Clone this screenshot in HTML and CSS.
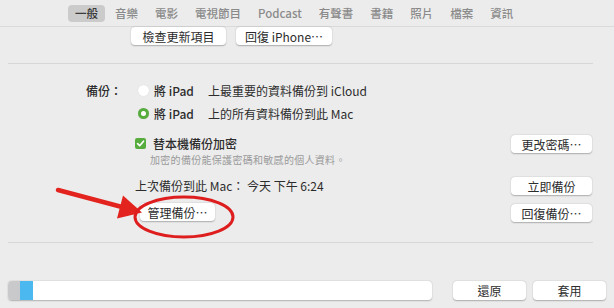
FILE: index.html
```html
<!DOCTYPE html>
<html lang="zh-Hant">

<head>
    <meta charset="UTF-8">
    <title>一般</title>
    <link rel="stylesheet" href="styles.css">
</head>

<body>
    <div class="window">
        <nav class="tabs">
            <span class="tab active">一般</span>
            <span class="tab">音樂</span>
            <span class="tab">電影</span>
            <span class="tab">電視節目</span>
            <span class="tab">Podcast</span>
            <span class="tab">有聲書</span>
            <span class="tab">書籍</span>
            <span class="tab">照片</span>
            <span class="tab">檔案</span>
            <span class="tab">資訊</span>
        </nav>

        <div class="top-row">
            <button class="btn btn-check">檢查更新項目</button>
            <button class="btn btn-restore-phone">回復 iPhone⋯</button>
        </div>

        <div class="divider divider-top"></div>

        <section class="backup">
            <div class="options">
                <div class="radio-row first">
                    <span class="label">備份：</span>
                    <span class="radio"></span>
                    <span class="target">將 iPad</span>
                    <span>上最重要的資料備份到 iCloud</span>
                </div>
                <div class="radio-row">
                    <span class="label"></span>
                    <span class="radio checked"></span>
                    <span class="target">將 iPad</span>
                    <span>上的所有資料備份到此 Mac</span>
                </div>
                <div class="check-row">
                    <span class="checkbox">
                        <svg width="9" height="9" viewBox="0 0 9 9">
                            <path d="M1.6 4.6 L3.7 6.7 L7.5 2.2" fill="none" stroke="#fff" stroke-width="1.7" stroke-linecap="round" stroke-linejoin="round" />
                        </svg>
                    </span>
                    <span class="check-text">替本機備份加密</span>
                </div>
                <div class="note">加密的備份能保護密碼和敏感的個人資料。</div>
                <div class="last-backup">上次備份到此 Mac： 今天 下午 6:24</div>
                <button class="btn btn-manage">管理備份⋯</button>
            </div>

            <div class="actions">
                <button class="btn btn-side btn-password">更改密碼⋯</button>
                <button class="btn btn-side btn-now">立即備份</button>
                <button class="btn btn-side btn-restore">回復備份⋯</button>
            </div>
        </section>

        <div class="divider divider-bottom"></div>

        <footer class="footer">
            <div class="storage">
                <span class="seg seg-other"></span>
                <span class="seg seg-apps"></span>
            </div>
            <button class="btn btn-foot btn-revert">還原</button>
            <button class="btn btn-foot btn-apply">套用</button>
        </footer>

        <!-- annotation drawn over the screenshot -->
        <svg class="markup" width="614" height="308" viewBox="0 0 614 308">
            <line x1="58" y1="190" x2="122" y2="207" stroke="#e3231d" stroke-width="4.5" stroke-linecap="round" />
            <polygon points="142,212.5 117,218.5 123,195.5" fill="#e3231d" />
            <ellipse cx="184" cy="217" rx="49" ry="20" fill="none" stroke="#de1e1e" stroke-width="3" />
        </svg>
    </div>
</body>

</html>
```

FILE: styles.css
```css
* {
    box-sizing: border-box;
}

body {
    margin: 0;
    background-color: #ececec;
    font-family: "Noto Sans CJK TC", "Noto Sans", sans-serif;
    font-size: 12px;
    color: #2c2c2c;
}

.window {
    position: relative;
    width: 614px;
    height: 308px;
    overflow: hidden;
}

/* -- Tab bar -- */

.tabs {
    display: flex;
    align-items: center;
    gap: 3px;
    height: 27px;
    padding-left: 68px;
    border-bottom: 1px solid #dadada;
}

.tab {
    height: 17px;
    line-height: 17px;
    padding: 0 7px;
    border-radius: 4px;
    font-size: 11.5px;
    font-weight: 500;
    color: #8a8a8a;
}

.tab.active {
    background-color: #cbcbcb;
    color: #3a3a3a;
}

/* -- Buttons -- */

.btn {
    display: flex;
    align-items: center;
    justify-content: center;
    height: 18px;
    padding: 0;
    border: none;
    border-radius: 4px;
    background-color: #fff;
    box-shadow: 0 0.5px 1.5px rgba(0, 0, 0, 0.28);
    font-family: inherit;
    font-size: 12px;
    color: #2c2c2c;
}

.top-row {
    display: flex;
    gap: 10px;
    padding-left: 131px;
}

.btn-check {
    width: 95px;
}

.btn-restore-phone {
    width: 96px;
}

.divider {
    height: 1px;
    margin: 0 21px 0 8px;
    background-color: #d7d7d7;
}

.divider-top {
    margin-top: 18px;
}

.divider-bottom {
    margin-top: 20px;
}

/* -- Backup section -- */

.backup {
    display: flex;
    justify-content: space-between;
    padding-right: 22px;
}

.options {
    display: flex;
    flex-direction: column;
}

.radio-row {
    display: flex;
    align-items: center;
    height: 20px;
    margin-top: 3px;
}

.radio-row.first {
    margin-top: 16px;
}

.label {
    width: 125px;
    padding-right: 3px;
    text-align: right;
    font-weight: 500;
}

.radio {
    width: 11px;
    height: 11px;
    margin-left: 13px;
    margin-right: 5px;
    border-radius: 50%;
    background-color: #fff;
    box-shadow: 0 0 1px rgba(0, 0, 0, 0.15);
}

.radio.checked {
    border: 3.5px solid #56ad3e;
}

.target {
    width: 54px;
    font-weight: 500;
}

.check-row {
    display: flex;
    align-items: center;
    height: 20px;
    margin-top: 10px;
    padding-left: 135px;
}

.checkbox {
    display: flex;
    align-items: center;
    justify-content: center;
    width: 11px;
    height: 11px;
    margin-right: 7px;
    border-radius: 2px;
    background-color: #56ad3e;
}

.check-text {
    font-weight: 500;
}

.note {
    height: 14px;
    line-height: 14px;
    padding-left: 150px;
    font-size: 10px;
    letter-spacing: 0.3px;
    color: #9a9a9a;
}

.last-backup {
    height: 20px;
    line-height: 20px;
    margin-top: 9px;
    padding-left: 135px;
}

.btn-manage {
    width: 75px;
    margin-top: 7px;
    margin-left: 140px;
}

.actions {
    display: flex;
    flex-direction: column;
    padding-top: 71px;
}

.btn-side {
    width: 81px;
}

.btn-now {
    margin-top: 24px;
}

.btn-restore {
    margin-top: 9px;
}

/* -- Footer -- */

.footer {
    display: flex;
    align-items: center;
    margin-top: 38px;
    padding-left: 8px;
}

.storage {
    display: flex;
    width: 424px;
    height: 19px;
    border-radius: 4px;
    overflow: hidden;
    background-color: #fff;
    box-shadow: 0 0.5px 1.5px rgba(0, 0, 0, 0.25);
}

.seg-other {
    width: 12px;
    background-color: #c9c9cc;
}

.seg-apps {
    width: 13px;
    background-color: #4cb8f0;
}

.btn-foot {
    width: 73px;
    height: 19px;
}

.btn-revert {
    margin-left: 21px;
}

.btn-apply {
    margin-left: 7px;
}

.markup {
    position: absolute;
    left: 0;
    top: 0;
    pointer-events: none;
}
```
